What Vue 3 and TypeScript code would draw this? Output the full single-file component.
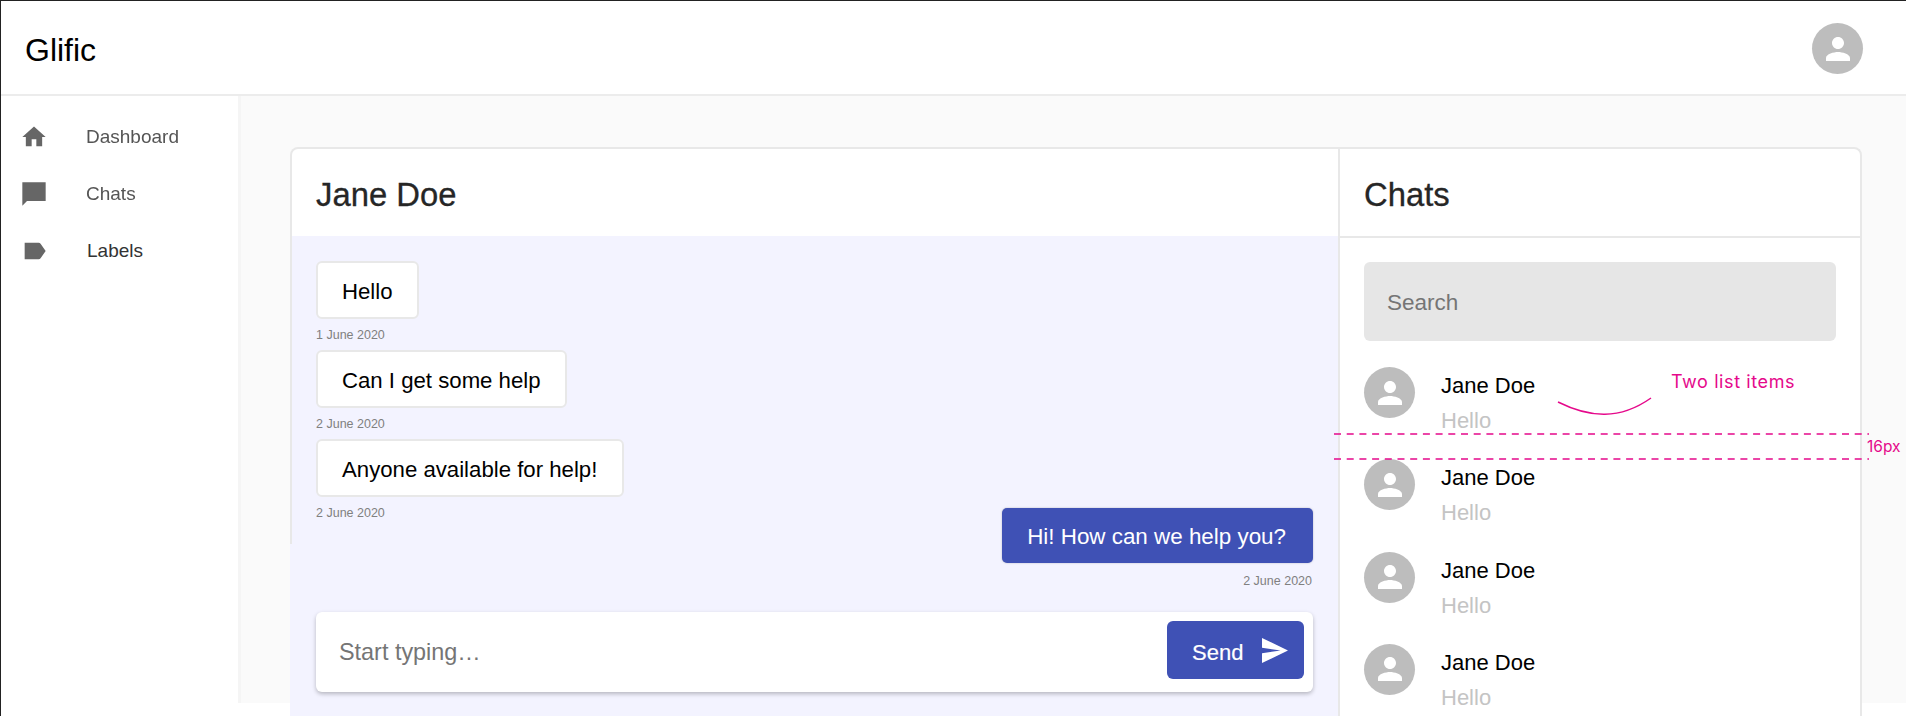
<script setup lang="ts">
interface Message {
  id: number
  text: string
  date: string
  mine?: boolean
}

const navItems = [
  { label: 'Dashboard', dark: false, path: 'M10 20v-6h4v6h5v-8h3L12 3 2 12h3v8z' },
  { label: 'Chats', dark: false, path: 'M22 2H2v20l4-4h16z' },
  {
    label: 'Labels',
    dark: true,
    path: 'M17.63 5.84C17.27 5.33 16.67 5 16 5L4 5.01V19l12 0c.67 0 1.27-.33 1.63-.84L22 12l-4.37-6.16z'
  }
]

const messages: Message[] = [
  { id: 1, text: 'Hello', date: '1 June 2020' },
  { id: 2, text: 'Can I get some help', date: '2 June 2020' },
  { id: 3, text: 'Anyone available for help!', date: '2 June 2020' },
  { id: 4, text: 'Hi! How can we help you?', date: '2 June 2020', mine: true }
]

const chats = [1, 2, 3, 4]

const personPath =
  'M12 12c2.21 0 4-1.79 4-4s-1.79-4-4-4-4 1.79-4 4 1.79 4 4 4zm0 2c-2.67 0-8 1.34-8 4v2h16v-2c0-2.66-5.33-4-8-4z'
</script>

<template>
  <div class="page">
    <header class="topbar">
      <span class="brand">Glific</span>
      <span class="avatar top-avatar">
        <svg viewBox="0 0 24 24" width="36" height="36"><path :d="personPath" /></svg>
      </span>
    </header>

    <div class="body">
      <nav class="sidebar">
        <a v-for="item in navItems" :key="item.label" :class="['nav-item', { dark: item.dark }]">
          <svg class="nav-icon" viewBox="0 0 24 24" width="28" height="28"><path :d="item.path" /></svg>
          <span class="nav-label">{{ item.label }}</span>
        </a>
      </nav>

      <main class="main">
        <section class="card">
          <div class="conversation">
            <h2 class="card-title">Jane Doe</h2>
            <div class="thread">
              <div
                v-for="msg in messages"
                :key="msg.id"
                :class="['message', { mine: msg.mine }]"
              >
                <div class="bubble">{{ msg.text }}</div>
                <div class="date">{{ msg.date }}</div>
              </div>

              <div class="composer">
                <span class="placeholder">Start typing…</span>
                <button class="send" type="button">
                  Send
                  <svg viewBox="2 3 21 18" width="26" height="25" preserveAspectRatio="none">
                    <path d="M2.01 21L23 12 2.01 3 2 10l15 2-15 2z" />
                  </svg>
                </button>
              </div>
            </div>
          </div>

          <aside class="chats">
            <h2 class="card-title bordered">Chats</h2>
            <div class="search">Search</div>
            <ul class="chat-list">
              <li v-for="chat in chats" :key="chat" class="chat-item">
                <span class="avatar">
                  <svg viewBox="0 0 24 24" width="36" height="36"><path :d="personPath" /></svg>
                </span>
                <div>
                  <div class="chat-name">Jane Doe</div>
                  <div class="chat-last">Hello</div>
                </div>
              </li>
            </ul>
          </aside>
        </section>
      </main>
    </div>

    <!-- design notes drawn on top of the mock -->
    <svg class="notes" width="1906" height="716" viewBox="0 0 1906 716">
      <path class="dash" d="M1334 434H1869" />
      <path class="dash" d="M1334 459H1869" />
      <path class="curve" d="M1558 402C1590 418 1620 420 1651 398" />
    </svg>
    <span class="note note-items">Two list items</span>
    <span class="note note-gap">16px</span>
  </div>
</template>

<style>
html,
body {
  margin: 0;
  background: #fff;
  overflow: hidden;
}
</style>

<style scoped>
.page {
  position: relative;
  box-sizing: border-box;
  width: 1906px;
  height: 716px;
  overflow: hidden;
  border-top: 1px solid #222;
  border-left: 1px solid #222;
  background: #fff;
  font-family: "Liberation Sans", Arial, sans-serif;
  color: #000;
}

.topbar {
  box-sizing: border-box;
  height: 95px;
  display: flex;
  align-items: center;
  justify-content: space-between;
  padding: 0 43px 0 24px;
  border-bottom: 2px solid #ececec;
}

.brand {
  font-size: 32px;
  padding-top: 6px;
}

.avatar {
  flex: none;
  width: 51px;
  height: 51px;
  border-radius: 50%;
  background: #bdbdbd;
  display: flex;
  align-items: center;
  justify-content: center;
}

.top-avatar {
  margin-top: 2px;
}

.avatar svg {
  fill: #fff;
}

.body {
  display: flex;
  height: 607px;
}

.sidebar {
  box-sizing: border-box;
  flex: none;
  width: 240px;
  padding-top: 12px;
  border-right: 3px solid #f5f5f5;
}

.nav-item {
  height: 57px;
  display: flex;
  align-items: center;
  padding-left: 19px;
  color: #555;
}

.nav-item.dark {
  color: #333;
}

.nav-icon {
  flex: none;
  fill: #666;
  margin-right: 38px;
  filter: blur(0.5px);
}

.nav-label {
  font-size: 19px;
  filter: blur(0.4px);
}

.nav-item.dark .nav-label {
  margin-left: 1px;
  filter: none;
}

.main {
  flex: 1;
  min-width: 0;
  padding: 51px 0 0 49px;
  background: #fafafa;
}

.card {
  box-sizing: border-box;
  display: flex;
  width: 1572px;
  height: 569px;
  border: 2px solid #e8e8e8;
  border-bottom: 0;
  border-radius: 8px 8px 0 0;
  background: #fff;
}

.conversation {
  flex: none;
  width: 1046px;
  display: flex;
  flex-direction: column;
}

.card-title {
  box-sizing: border-box;
  flex: none;
  height: 87px;
  margin: 0;
  padding: 4px 0 0 24px;
  display: flex;
  align-items: center;
  font-size: 32.8px;
  font-weight: 400;
  color: #262626;
  -webkit-text-stroke: 0.3px #262626;
}

.card-title.bordered {
  height: 89px;
  border-bottom: 2px solid #e8e8e8;
}

.thread {
  flex: 1;
  display: flex;
  flex-direction: column;
  align-items: flex-start;
  margin-left: -2px;
  padding: 25px 25px 0 26px;
  background: linear-gradient(#e8e8e8, #e8e8e8) 0 0 / 2px 308px no-repeat, #f3f3ff;
}

.message {
  display: flex;
  flex-direction: column;
  align-items: flex-start;
  margin-bottom: 7px;
}

.message.mine {
  align-self: flex-end;
  align-items: flex-end;
  margin: -20px 0 0;
}

.bubble {
  box-sizing: border-box;
  height: 58px;
  padding: 3px 24.5px 0 24px;
  display: flex;
  align-items: center;
  border: 2px solid #e8e8e8;
  border-radius: 6px;
  background: #fff;
  font-size: 22.2px;
}

.mine .bubble {
  height: 55px;
  border: 0;
  border-radius: 5px;
  padding: 3px 27px 0 25px;
  background: #3f51b5;
  box-shadow: 0 0 2px rgba(0, 0, 0, 0.25);
  color: #fff;
  font-size: 22.4px;
}

.date {
  margin-top: 8px;
  line-height: 16px;
  font-size: 12.5px;
  color: #808080;
}

.mine .date {
  margin-right: 1px;
  margin-top: 10px;
}

.composer {
  box-sizing: border-box;
  align-self: stretch;
  height: 80px;
  margin-top: 23px;
  padding: 0 9px 0 23px;
  display: flex;
  align-items: center;
  justify-content: space-between;
  border-radius: 6px;
  background: #fff;
  box-shadow: 0 2px 4px rgba(0, 0, 0, 0.25);
}

.placeholder {
  font-size: 23.4px;
  color: #757575;
}

.send {
  box-sizing: border-box;
  width: 137px;
  height: 58px;
  margin-bottom: 4px;
  padding: 5px 16px 0 25px;
  display: flex;
  align-items: center;
  justify-content: space-between;
  border: 0;
  border-radius: 6px;
  background: #3f51b5;
  color: #fff;
  font-family: inherit;
  font-size: 22px;
  -webkit-text-stroke: 0.2px #fff;
}

.send svg {
  fill: #fff;
  margin-top: -5px;
}

.chats {
  flex: 1;
  min-width: 0;
  border-left: 2px solid #e8e8e8;
}

.search {
  box-sizing: border-box;
  height: 79px;
  margin: 24px 24px 0 24px;
  padding: 2px 0 0 23px;
  display: flex;
  align-items: center;
  border-radius: 6px;
  background: #e6e6e6;
  font-size: 22.5px;
  color: #757575;
}

.chat-list {
  list-style: none;
  margin: 26px 24px 0 24px;
  padding: 0;
  display: flex;
  flex-direction: column;
  gap: 16px;
}

.chat-item {
  display: flex;
  height: 76.33px;
  gap: 26px;
}

.chat-name {
  margin-top: 6px;
  line-height: 26px;
  font-size: 22px;
}

.chat-last {
  margin-top: 9px;
  line-height: 26px;
  font-size: 22px;
  color: #c4c4c4;
}

.notes {
  position: absolute;
  top: -1px;
  left: -1px;
  pointer-events: none;
  fill: none;
  stroke: #e5098b;
}

.dash {
  stroke-width: 1.5;
  stroke-dasharray: 7 5.7;
}

.curve {
  stroke-width: 1.5;
}

.note {
  position: absolute;
  font-family: Inter, sans-serif;
  color: #e5098b;
  white-space: nowrap;
}

.note-items {
  top: 370px;
  left: 1670px;
  font-size: 18px;
  line-height: 22px;
  letter-spacing: 0.6px;
}

.note-gap {
  top: 437px;
  left: 1866px;
  font-size: 15.5px;
  line-height: 18px;
}
</style>
